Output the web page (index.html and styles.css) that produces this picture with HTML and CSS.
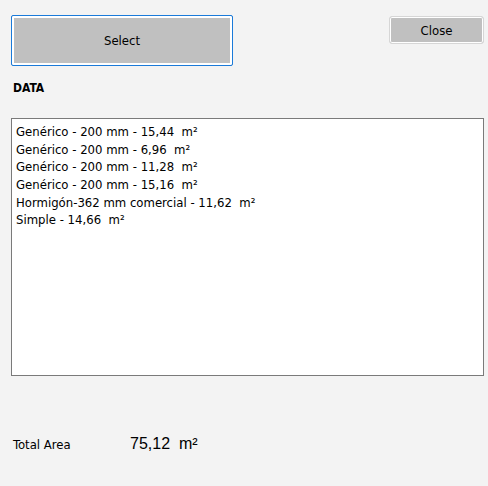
FILE: index.html
```html
<!DOCTYPE html>
<html>
<head>
<meta charset="utf-8">
<link rel="stylesheet" href="styles.css">
</head>
<body>
<div class="app">
  <div class="toolbar">
    <button class="btn btn-select">Select</button>
    <button class="btn btn-close">Close</button>
  </div>
  <div class="label-data">DATA</div>
  <div class="listbox">
    <div class="item">Genérico - 200 mm - 15,44&nbsp; m²</div>
    <div class="item">Genérico - 200 mm - 6,96&nbsp; m²</div>
    <div class="item">Genérico - 200 mm - 11,28&nbsp; m²</div>
    <div class="item">Genérico - 200 mm - 15,16&nbsp; m²</div>
    <div class="item">Hormigón-362 mm comercial - 11,62&nbsp; m²</div>
    <div class="item">Simple - 14,66&nbsp; m²</div>
  </div>
  <div class="total">
    <span class="total-label">Total Area</span>
    <span class="total-value">75,12&nbsp; m²</span>
  </div>
</div>
</body>
</html>
```
FILE: styles.css
```css
html, body {
  margin: 0;
  padding: 0;
  background: #f3f3f3;
}
.app {
  width: 488px;
  height: 486px;
  font-family: "DejaVu Sans Condensed", "DejaVu Sans", sans-serif;
  font-size: 13px;
  color: #000;
}
.toolbar {
  display: flex;
  justify-content: space-between;
  align-items: flex-start;
  padding: 15px 4px 0 11px;
}
.btn {
  font-family: inherit;
  font-size: 13px;
  color: #000;
  background: #c0c0c0;
  margin: 0;
  padding: 0;
  cursor: default;
}
.btn-select {
  width: 222px;
  height: 51px;
  border: 1px solid #1a7ad9;
  border-radius: 2px;
  box-shadow: inset 0 0 0 2px #ffffff;
}
.btn-close {
  margin-top: 1px;
  width: 95px;
  height: 28px;
  border: 1px solid #d6d6d6;
  border-radius: 3px;
  box-shadow: inset 0 0 0 1px #ffffff;
}
.label-data {
  font-weight: bold;
  font-size: 12px;
  padding: 15px 0 0 13px;
  height: 22px;
}
.listbox {
  margin: 15px 4px 0 11px;
  background: #fff;
  border: 1px solid #7a7a7a;
  padding: 4px 0 0 4px;
  box-sizing: border-box;
  height: 258px;
}
.item {
  line-height: 17.66px;
  white-space: nowrap;
}
.total {
  display: flex;
  align-items: center;
  padding: 59px 0 0 13px;
}
.total-label {
  width: 117px;
}
.total-value {
  font-family: "Liberation Sans", Arial, sans-serif;
  font-size: 16px;
}
```
